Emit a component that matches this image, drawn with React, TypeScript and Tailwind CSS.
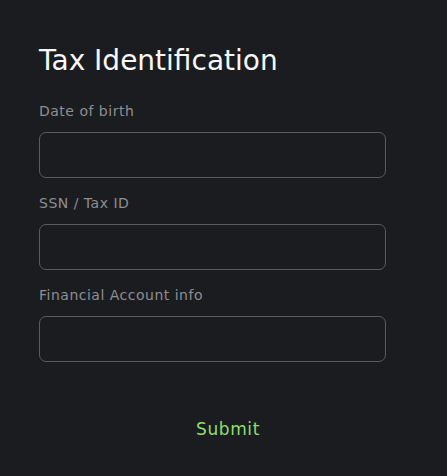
import React from 'react'

const fields = ['Date of birth', 'SSN / Tax ID', 'Financial Account info']

export default function App() {
  return (
    <div className="min-h-[476px] w-full bg-[#1b1c20] font-['DejaVu_Sans','Noto_Sans',sans-serif]">
      <div className="pl-[39px] pt-[44px]">
        <h1 className="text-[28px] leading-[34px] font-normal text-[#f7f7f7]">Tax Identification</h1>
        <form className="mt-[25px] w-[347px] flex flex-col gap-[17px]">
          {fields.map((label) => (
            <label key={label} className="flex flex-col gap-[13px]">
              <span className="text-[14px] leading-[16px] tracking-[0.5px] text-[#8d8e92]">{label}</span>
              <input
                type="text"
                className="h-[46px] w-full rounded-[7px] border border-[#5a5b60] bg-transparent px-3 text-white outline-none"
              />
            </label>
          ))}
        </form>
        <div className="mt-[56px] flex w-[378px] justify-center">
          <button type="button" className="text-[17px] leading-[22px] tracking-[0.6px] font-normal text-[#8fdc6e]">
            Submit
          </button>
        </div>
      </div>
    </div>
  )
}
